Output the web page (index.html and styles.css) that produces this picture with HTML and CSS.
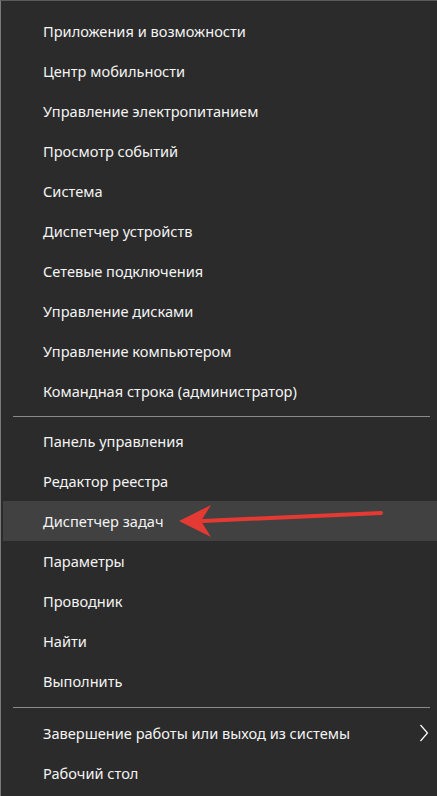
FILE: index.html
```
<!DOCTYPE html>
<html lang="ru">
<head>
<meta charset="utf-8">
<link rel="stylesheet" href="styles.css">
</head>
<body>
<div class="menu">
  <div class="item"><span>Приложения и возможности</span></div>
  <div class="item"><span>Центр мобильности</span></div>
  <div class="item"><span>Управление электропитанием</span></div>
  <div class="item"><span>Просмотр событий</span></div>
  <div class="item"><span>Система</span></div>
  <div class="item"><span>Диспетчер устройств</span></div>
  <div class="item"><span>Сетевые подключения</span></div>
  <div class="item"><span>Управление дисками</span></div>
  <div class="item"><span>Управление компьютером</span></div>
  <div class="item"><span>Командная строка (администратор)</span></div>
  <div class="sep"></div>
  <div class="item"><span>Панель управления</span></div>
  <div class="item"><span>Редактор реестра</span></div>
  <div class="item active"><span>Диспетчер задач</span></div>
  <div class="item"><span>Параметры</span></div>
  <div class="item"><span>Проводник</span></div>
  <div class="item"><span>Найти</span></div>
  <div class="item"><span>Выполнить</span></div>
  <div class="sep sep-low"></div>
  <div class="item sub"><span>Завершение работы или выход из системы</span>
    <svg class="chev" width="10" height="18" viewBox="0 0 10 18"><polyline points="1.5,1 8.5,9 1.5,17" fill="none" stroke="#ffffff" stroke-width="1.2"/></svg>
  </div>
  <div class="item"><span>Рабочий стол</span></div>
  <svg class="arrow" width="220" height="40" viewBox="0 0 220 40">
    <line x1="202" y1="12" x2="24" y2="20" stroke="#e53a33" stroke-width="4" stroke-linecap="round"/>
    <polygon points="0,20 32,4 22,20 32,36" fill="#e53a33"/>
  </svg>
</div>
</body>
</html>
```
FILE: styles.css
```
html, body {
  margin: 0;
  padding: 0;
  background: #2b2b2b;
}
.menu {
  position: relative;
  width: 437px;
  height: 796px;
  box-sizing: border-box;
  background: #2b2b2b;
  border-top: 1px solid #5a5a5a;
  border-left: 1px solid #7a7a7a;
  padding: 10px 0 0 2px;
  font-family: "Noto Sans", "Open Sans", sans-serif;
  font-size: 14.6px;
  color: #f4f4f4;
  overflow: hidden;
}
.item {
  height: 40px;
  display: flex;
  align-items: center;
  padding-left: 40px;
  position: relative;
}
.item span {
  white-space: nowrap;
}
.item.active {
  background: #414141;
}
.sep {
  height: 10px;
  display: flex;
  align-items: center;
  padding: 0 7px 0 10px;
}
.sep.sep-low {
  height: 12px;
  padding-top: 1px;
  box-sizing: border-box;
  height: 12px;
}
.sep::before {
  content: "";
  display: block;
  flex: 1;
  height: 1px;
  background: #8a8a8a;
}
.chev {
  position: absolute;
  right: 8px;
  top: 11px;
}
.arrow {
  position: absolute;
  left: 178px;
  top: 500px;
}
```
